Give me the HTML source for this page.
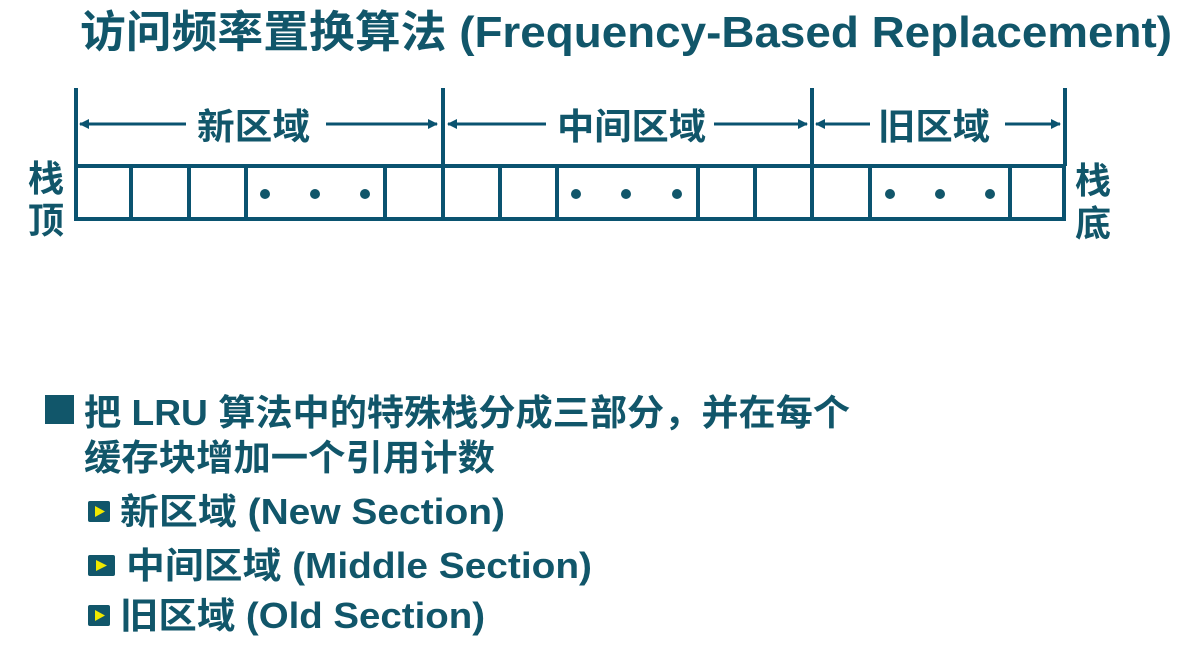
<!DOCTYPE html>
<html><head><meta charset="utf-8"><style>
body{margin:0;width:1187px;height:641px;background:#fff;overflow:hidden}
svg text{font-family:"Liberation Sans","Noto Sans CJK SC",sans-serif;font-weight:bold;fill:#11566a}
</style></head><body>
<svg width="1187" height="641" viewBox="0 0 1187 641">
<defs><marker id="a" markerWidth="10" markerHeight="10" refX="9" refY="5" orient="auto-start-reverse" markerUnits="userSpaceOnUse"><path d="M0,0 L10,5 L0,10 Z" fill="#0a5370"/></marker></defs>
<text x="80" y="47" font-size="44" textLength="1092" lengthAdjust="spacingAndGlyphs">访问频率置换算法 (Frequency-Based Replacement)</text>
<g stroke="#0a5370" stroke-width="4" fill="none">
<line x1="76" y1="88" x2="76" y2="166"/><line x1="443" y1="88" x2="443" y2="166"/>
<line x1="812" y1="88" x2="812" y2="166"/><line x1="1065" y1="88" x2="1065" y2="166"/>
<rect x="76" y="166" width="988" height="53"/>
<path d="M131 166V219M189 166V219M246 166V219M385 166V219M443 166V219M500 166V219M557 166V219M698 166V219M755 166V219M812 166V219M870 166V219M1010 166V219"/>
<g stroke-width="3">
<line x1="186" y1="124" x2="80" y2="124" marker-end="url(#a)"/><line x1="326" y1="124" x2="437" y2="124" marker-end="url(#a)"/>
<line x1="546" y1="124" x2="448" y2="124" marker-end="url(#a)"/><line x1="714" y1="124" x2="807" y2="124" marker-end="url(#a)"/>
<line x1="870" y1="124" x2="816" y2="124" marker-end="url(#a)"/><line x1="1005" y1="124" x2="1060" y2="124" marker-end="url(#a)"/>
</g></g>
<g fill="#11566a"><circle cx="265" cy="194" r="5"/><circle cx="315" cy="194" r="5"/><circle cx="365" cy="194" r="5"/>
<circle cx="576" cy="194" r="5"/><circle cx="626" cy="194" r="5"/><circle cx="677" cy="194" r="5"/>
<circle cx="890" cy="194" r="5"/><circle cx="940" cy="194" r="5"/><circle cx="990" cy="194" r="5"/></g>
<text x="197" y="139" font-size="36" textLength="113" lengthAdjust="spacingAndGlyphs">新区域</text>
<text x="557" y="139" font-size="36" textLength="149" lengthAdjust="spacingAndGlyphs">中间区域</text>
<text x="878" y="139" font-size="36" textLength="112" lengthAdjust="spacingAndGlyphs">旧区域</text>
<text x="28" y="191" font-size="36">栈</text><text x="28" y="233" font-size="36">顶</text>
<text x="1075" y="193" font-size="36">栈</text><text x="1075" y="236" font-size="36">底</text>
<rect x="45" y="395" width="29" height="29" fill="#11566a"/>
<text x="84" y="425" font-size="36" textLength="766" lengthAdjust="spacingAndGlyphs">把 LRU 算法中的特殊栈分成三部分，并在每个</text>
<text x="84" y="470" font-size="36" textLength="411" lengthAdjust="spacingAndGlyphs">缓存块增加一个引用计数</text>
<g><rect x="88" y="501" width="22" height="21" rx="2" fill="#11566a"/><path d="M95 506L105 511.5L95 517Z" fill="#f0e800"/>
<rect x="88" y="555" width="27" height="21" rx="2" fill="#11566a"/><path d="M96 560L107 565.5L96 571Z" fill="#f0e800"/>
<rect x="88" y="605" width="22" height="21" rx="2" fill="#11566a"/><path d="M95 610L105 615.5L95 621Z" fill="#f0e800"/></g>
<text x="120" y="524" font-size="36" textLength="385" lengthAdjust="spacingAndGlyphs">新区域 (New Section)</text>
<text x="126" y="578" font-size="36" textLength="466" lengthAdjust="spacingAndGlyphs">中间区域 (Middle Section)</text>
<text x="120" y="628" font-size="36" textLength="365" lengthAdjust="spacingAndGlyphs">旧区域 (Old Section)</text>
</svg>
</body></html>
